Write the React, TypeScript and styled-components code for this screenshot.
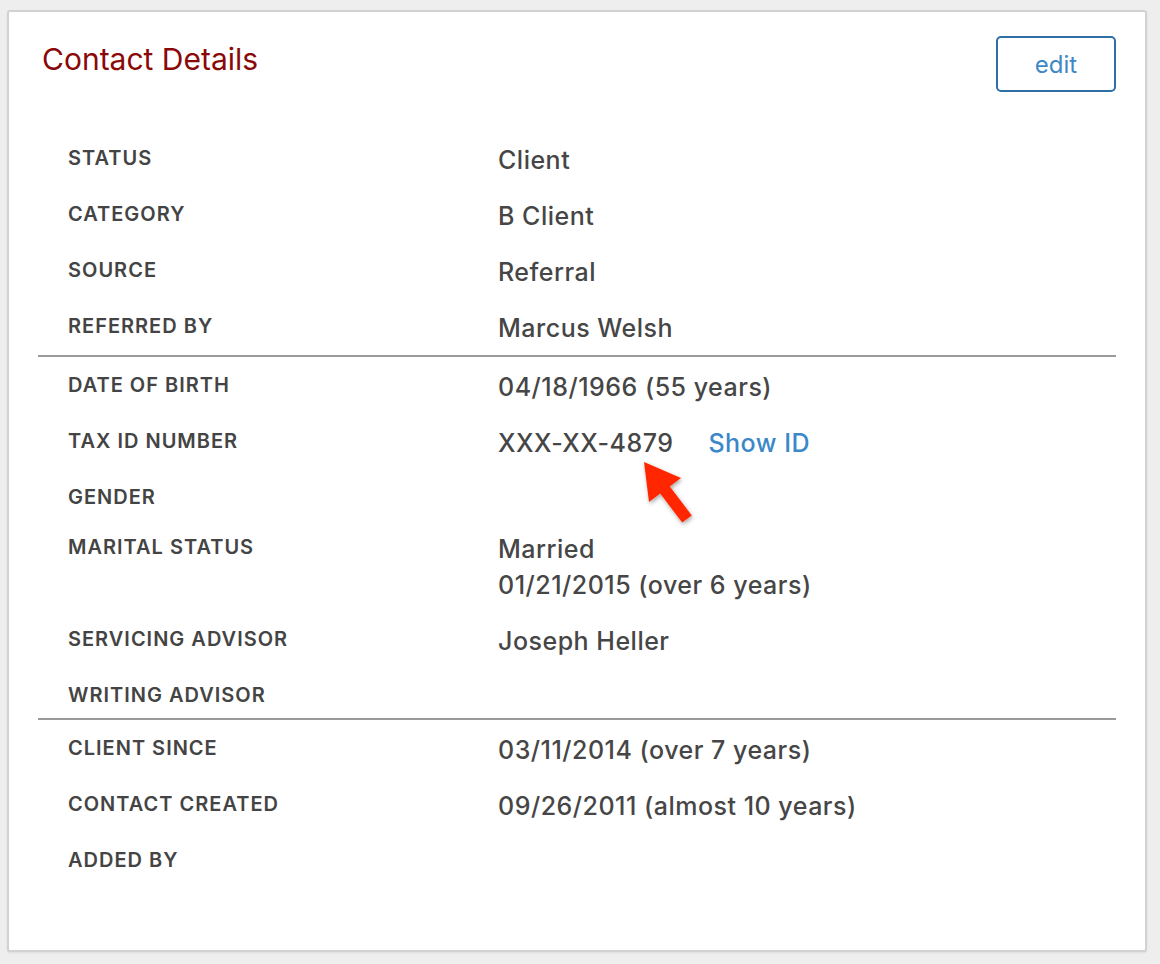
import React from "react";
import styled, { createGlobalStyle } from "styled-components";

const Global = createGlobalStyle`
  html, body { margin: 0; padding: 0; background: #eeeeee; }
  body { font-family: Inter, "Open Sans", "Liberation Sans", sans-serif; -webkit-font-smoothing: antialiased; }
  * { box-sizing: border-box; }
`;

const Page = styled.div`
  padding: 10px 13px 12px 7px;
`;

const Card = styled.section`
  position: relative;
  background: #fff;
  border: 2px solid #d2d2d2;
  border-radius: 3px;
  box-shadow: 0 1px 2px rgba(0, 0, 0, 0.08);
  height: 942px;
`;

const Header = styled.header`
  display: flex;
  justify-content: space-between;
  align-items: flex-start;
  padding: 24px 29px 0 33px;
`;

const Title = styled.h2`
  margin: 7px 0 0;
  font-size: 30px;
  line-height: 32px;
  font-weight: 400;
  color: #8a0808;
`;

const EditButton = styled.button`
  width: 120px;
  height: 56px;
  border: 2px solid #2f6ea6;
  border-radius: 5px;
  background: #fff;
  color: #3f88c8;
  font-family: inherit;
  font-size: 24px;
  font-weight: 400;
  cursor: pointer;
`;

const Sections = styled.div`
  margin: 38px 29px 0 29px;
`;

const Section = styled.dl`
  margin: 0;
  & + & {
    border-top: 2px solid #9a9a9a;
    margin-top: 1px;
  }
`;

const Row = styled.div`
  display: grid;
  grid-template-columns: 430px 1fr;
  padding: 10px 0 4px 30px;
`;

const Label = styled.dt`
  font-size: 20px;
  line-height: 36px;
  font-weight: 600;
  letter-spacing: 1px;
  text-transform: uppercase;
  color: #444;
`;

const Value = styled.dd`
  margin: 2px 0 4px;
  font-size: 25px;
  line-height: 36px;
  font-weight: 500;
  letter-spacing: 0.5px;
  color: #464646;
  display: flex;
  flex-direction: column;
`;

const Line = styled.span`
  display: flex;
  align-items: baseline;
  gap: 35px;
`;

const LinkText = styled.a`
  color: #3a87c9;
  text-decoration: none;
  cursor: pointer;
`;

const Arrow = styled.svg`
  position: absolute;
  left: 620px;
  top: 437px;
  overflow: visible;
`;

type Item = { label: string; lines?: React.ReactNode[] };

const sections: Item[][] = [
  [
    { label: "Status", lines: ["Client"] },
    { label: "Category", lines: ["B Client"] },
    { label: "Source", lines: ["Referral"] },
    { label: "Referred By", lines: ["Marcus Welsh"] },
  ],
  [
    { label: "Date of Birth", lines: ["04/18/1966 (55 years)"] },
    {
      label: "Tax ID Number",
      lines: [
        <>
          <span>XXX-XX-4879</span>
          <LinkText>Show ID</LinkText>
        </>,
      ],
    },
    { label: "Gender" },
    { label: "Marital Status", lines: ["Married", "01/21/2015 (over 6 years)"] },
    { label: "Servicing Advisor", lines: ["Joseph Heller"] },
    { label: "Writing Advisor" },
  ],
  [
    { label: "Client Since", lines: ["03/11/2014 (over 7 years)"] },
    { label: "Contact Created", lines: ["09/26/2011 (almost 10 years)"] },
    { label: "Added By" },
  ],
];

export default function App() {
  return (
    <Page>
      <Global />
      <Card>
        <Header>
          <Title>Contact Details</Title>
          <EditButton>edit</EditButton>
        </Header>
        <Sections>
          {sections.map((items, i) => (
            <Section key={i}>
              {items.map((it) => (
                <Row key={it.label}>
                  <Label>{it.label}</Label>
                  {it.lines && (
                    <Value>
                      {it.lines.map((l, j) => (
                        <Line key={j}>{l}</Line>
                      ))}
                    </Value>
                  )}
                </Row>
              ))}
            </Section>
          ))}
        </Sections>
        <Arrow width="90" height="100" viewBox="630 450 90 100">
          <defs>
            <filter id="sh" x="-30%" y="-30%" width="160%" height="160%">
              <feDropShadow dx="1" dy="2" stdDeviation="2" floodColor="#000" floodOpacity="0.35" />
            </filter>
          </defs>
          <polygon
            filter="url(#sh)"
            fill="#ff2800"
            points="645,463 682,479 670.8,487.4 692.8,516.4 683.2,523.6 661.2,494.6 650,503"
          />
        </Arrow>
      </Card>
    </Page>
  );
}
